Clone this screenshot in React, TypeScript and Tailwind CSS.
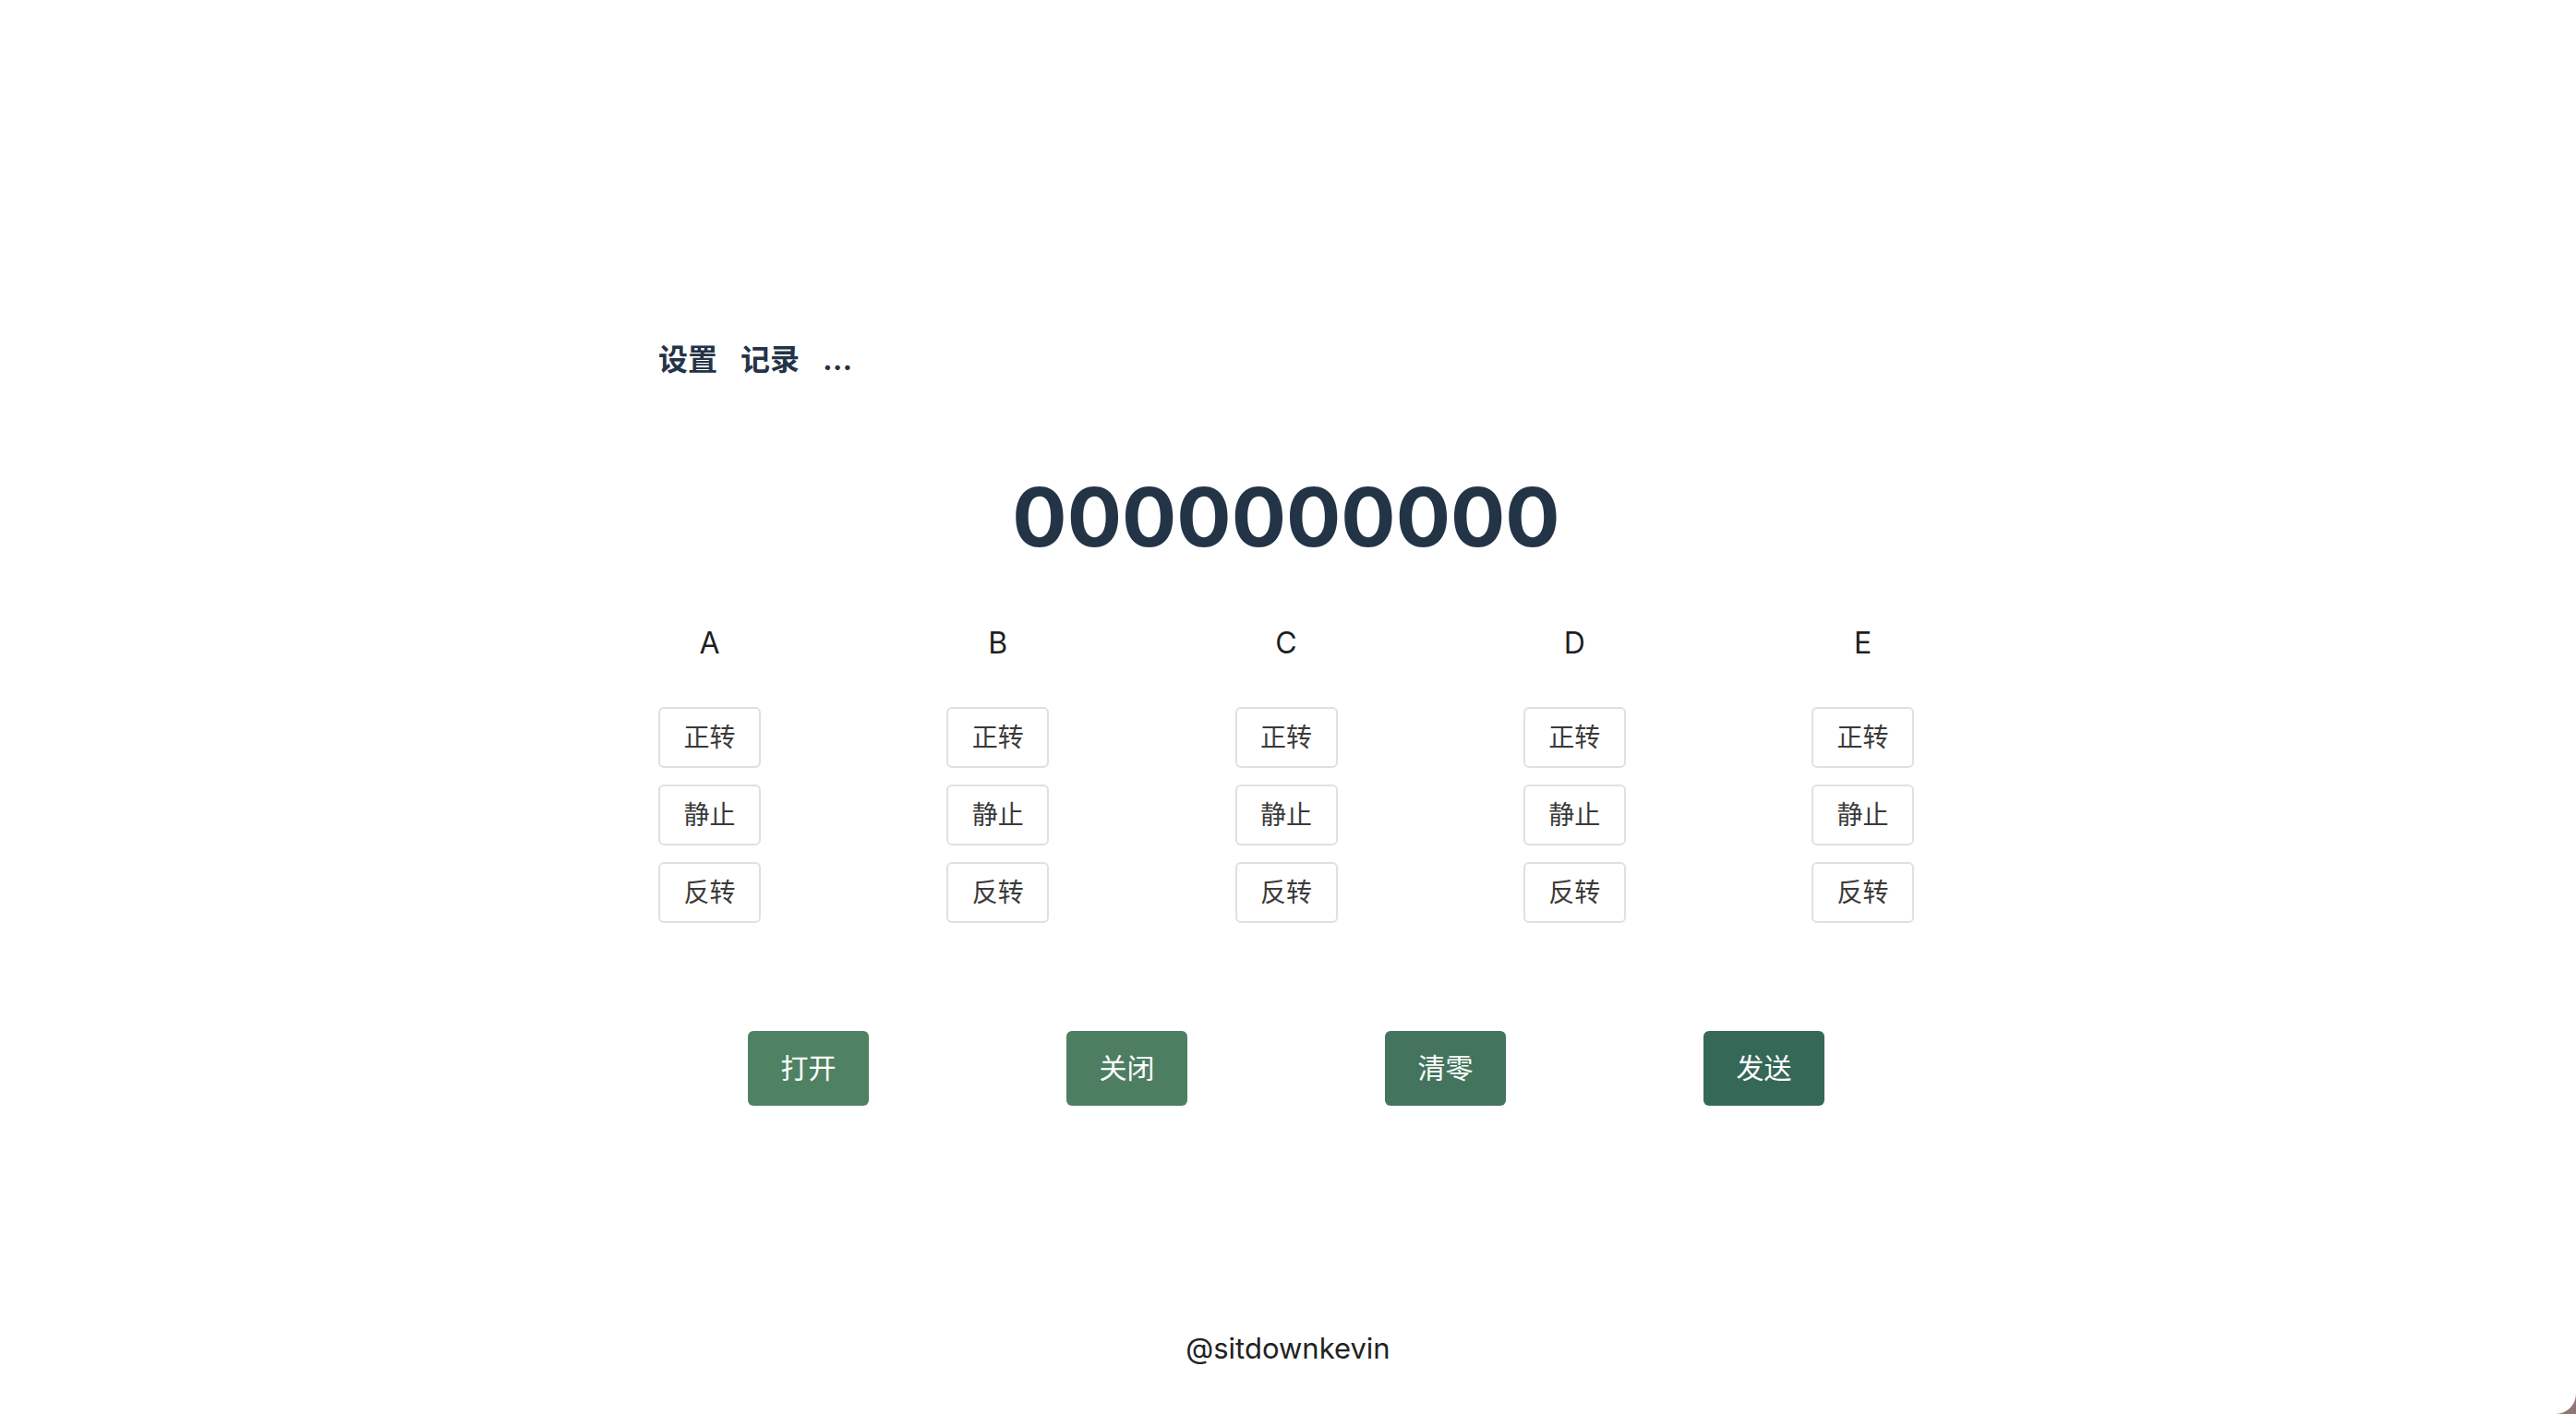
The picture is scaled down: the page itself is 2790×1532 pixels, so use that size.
const cjk = "font-['Inter','Noto_Sans_CJK_SC',sans-serif]";

const motors = ["A", "B", "C", "D", "E"];
const moves = ["正转", "静止", "反转"];

const actions = [
  { label: "打开", tone: "bg-[#4f8163]" },
  { label: "关闭", tone: "bg-[#4d7e62]" },
  { label: "清零", tone: "bg-[#44745e]" },
  { label: "发送", tone: "bg-[#366858]" },
];

export default function App() {
  return (
    <div className="min-h-screen bg-[#8e7676]">
      <div
        className={`flex min-h-screen flex-col rounded-br-[22px] bg-white ${cjk}`}
      >
        <main className="mx-auto w-[1364px] pr-[4px] pt-[370px]">
          {/* top links */}
          <nav className="flex items-center gap-[25px] text-[32px] font-bold leading-[40px] text-[#243447]">
            <a href="#">设置</a>
            <a href="#">记录</a>
            <a href="#">...</a>
          </nav>

          {/* counter */}
          <h1 className="mt-[106px] text-center text-[88px] font-bold leading-[88px] text-[#243447]">
            0000000000
          </h1>

          {/* motor controls */}
          <div className="mt-[77px] flex justify-between">
            {motors.map((m) => (
              <div key={m} className="flex w-[111px] flex-col items-center">
                <span className="text-[32px] leading-[32px] text-[#1f1f1f]">
                  {m}
                </span>
                <div className="mt-[53px] flex w-full flex-col gap-[18px]">
                  {moves.map((mv) => (
                    <button
                      key={mv}
                      className="h-[66px] w-full rounded-[6px] border-2 border-[#e0e0e4] bg-white text-[28px] text-[#3a3a3a]"
                    >
                      {mv}
                    </button>
                  ))}
                </div>
              </div>
            ))}
          </div>

          {/* actions */}
          <div className="mt-[117px] flex justify-center gap-[214px]">
            {actions.map((a) => (
              <button
                key={a.label}
                className={`h-[81px] w-[131px] rounded-[6px] text-[30px] text-white ${a.tone}`}
              >
                {a.label}
              </button>
            ))}
          </div>
        </main>

        <footer className="mt-auto pb-[56px] text-center text-[31px] leading-[30px] text-[#222]">
          @sitdownkevin
        </footer>
      </div>
    </div>
  );
}
